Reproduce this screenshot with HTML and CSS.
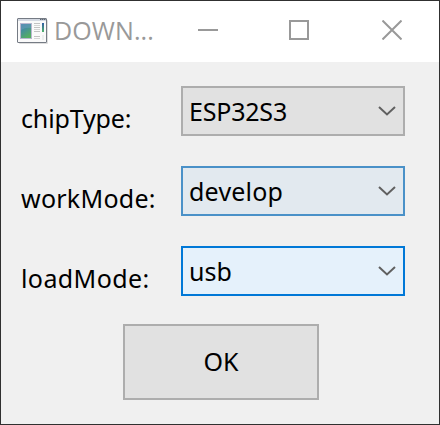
FILE: index.html
```html
<!DOCTYPE html>
<html lang="en">
<head>
<meta charset="utf-8">
<title>DOWNLOAD</title>
<link rel="stylesheet" href="styles.css">
</head>
<body>
<main class="window">
  <header class="titlebar">
    <svg class="app-icon" width="32" height="28" viewBox="0 0 32 28">
      <defs>
        <linearGradient id="picture" x1="0" y1="0" x2=".5" y2="1"><stop offset="0" stop-color="#4779ad"/><stop offset=".45" stop-color="#458f9b"/><stop offset="1" stop-color="#55ae62"/></linearGradient>
        <linearGradient id="bar" x1="0" y1="0" x2="0" y2="1"><stop offset="0" stop-color="#315da5"/><stop offset="1" stop-color="#50b36b"/></linearGradient>
      </defs>
      <rect x="2" y="2" width="29" height="24" rx="1" fill="#dedede"/>
      <rect x=".5" y=".5" width="29" height="24" rx=".5" fill="#fafafa" stroke="#757b84"/>
      <path d="M1 2h28" stroke="#d4d9e2" stroke-width="2"/>
      <path d="M23 1.500h1.500m.5 0h1.500m.5 0h1.500" stroke="#606875"/>
      <rect x="3.500" y="5.500" width="11" height="15" fill="url(#picture)" stroke="#b9b7cf"/>
      <path d="M4 12q5-3 10-2v-4H4z" fill="#6fa1be" opacity=".45"/>
      <path d="M17 5.500h6m-6 4h6m-6 4h6m-6 5h6" stroke="#c2c2c2"/>
      <path d="M17 7.500h6m-6 4h6m-6 9h6" stroke="#d5d5d5"/>
      <rect x="25" y="5" width="2" height="9" fill="url(#bar)"/>
      <path d="M25 17h2v5h-2z" fill="#eceeee"/>
    </svg>
    <span class="title">DOWN...</span>
    <div class="controls">
      <svg width="20" height="20"><path d="M0 10h20"/></svg>
      <svg width="20" height="20"><path d="M1 1h18v18H1z"/></svg>
      <svg class="close" width="20" height="20"><path d="M.5.5l19 19m0-19l-19 19"/></svg>
    </div>
  </header>
  <form class="form">
    <div class="row">
      <label class="label chip">chipType:</label>
      <div class="combo"><span class="esp">ESP32S3</span><svg class="arrow" width="18" height="12"><path d="M1 2l8 7.500L17 2"/></svg></div>
    </div>
    <div class="row">
      <label class="label work">workMode:</label>
      <div class="combo hover"><span class="develop">develop</span><svg class="arrow" width="18" height="12"><path d="M1 2l8 7.500L17 2"/></svg></div>
    </div>
    <div class="row">
      <label class="label load">loadMode:</label>
      <div class="combo focus"><span>usb</span><svg class="arrow" width="18" height="12"><path d="M1 2l8 7.500L17 2"/></svg></div>
    </div>
    <button class="ok" type="button">OK</button>
  </form>
</main>
</body>
</html>
```
FILE: styles.css
```css
* { box-sizing: border-box; }
body { margin: 0; }
.window {
  width: 440px;
  height: 425px;
  border: 1px solid #303030;
  background: #f0f0f0;
  color: #000;
  font: 25px/34px "Noto Sans", "Open Sans", sans-serif;
  overflow: hidden;
}
.titlebar {
  display: flex;
  height: 61px;
  padding-left: 16px;
  background: #fff;
}
.app-icon { margin-top: 17px; }
.title {
  width: 99px;
  margin: 12px 0 0 5px;
  color: #999;
  font-family: "Open Sans", sans-serif;
  white-space: nowrap;
  letter-spacing: 0.1px;
}
.controls {
  display: flex;
  gap: 71px;
  margin: 19px 0 0 45px;
}
.controls svg { fill: none; stroke: #999; stroke-width: 2; }
.controls .close { margin-left: 2px; }
.form {
  display: flex;
  flex-direction: column;
  gap: 30px;
  padding: 24px 34px 0 20px;
}
.row {
  display: flex;
  justify-content: space-between;
  height: 50px;
}
.label { padding-top: 15px; white-space: nowrap; }
.chip { letter-spacing: -0.15px; }
.work { letter-spacing: 0.25px; }
.load { letter-spacing: 0.4px; }
.esp { letter-spacing: -0.2px; }
.develop { letter-spacing: 0.2px; }
.combo {
  display: flex;
  align-items: center;
  justify-content: space-between;
  width: 224px;
  height: 50px;
  padding: 0 7px 1px 6px;
  border: 2px solid #adadad;
  background: #e1e1e1;
}
.combo.hover { border-color: #4a91c8; background: #e2e9ef; }
.combo.focus { border-color: #0078d7; background: #e5f1fb; }
.arrow { margin-top: 1px; fill: none; stroke: #606060; stroke-width: 2; }
.ok {
  width: 196px;
  height: 76px;
  margin: -2px 0 0 102px;
  padding: 0 0 2px;
  border: 2px solid #adadad;
  background: #e1e1e1;
  color: #000;
  font: inherit;
}
```
